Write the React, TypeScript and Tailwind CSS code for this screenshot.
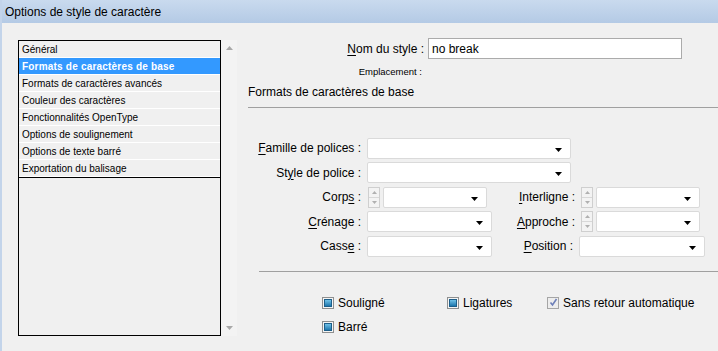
import React from 'react';

const items = [
  'Général',
  'Formats de caractères de base',
  'Formats de caractères avancés',
  'Couleur des caractères',
  'Fonctionnalités OpenType',
  'Options de soulignement',
  'Options de texte barré',
  'Exportation du balisage',
];

const Key = ({ children }: { children: React.ReactNode }) => (
  <span className="underline underline-offset-2">{children}</span>
);

const Label = ({ w, children }: { w: string; children: React.ReactNode }) => (
  <div className={`${w} shrink-0 text-right text-[12px] text-black leading-none`}>{children}</div>
);

const Caret = () => (
  <svg width="7" height="4" viewBox="0 0 7 4" className="absolute right-[8px] top-[9px]">
    <path d="M0 0h7L3.5 4z" fill="#000" />
  </svg>
);

const Select = ({ w }: { w: string }) => (
  <div className={`${w} relative h-[21px] shrink-0 rounded-[2px] border border-[#dadada] bg-white`}>
    <Caret />
  </div>
);

const Spinner = () => (
  <div className="flex h-[21px] w-[12px] shrink-0 flex-col border border-[#cfcfcf] bg-[#f3f3f3]">
    <div className="flex flex-1 items-center justify-center border-b border-[#d8d8d8]">
      <svg width="5" height="3" viewBox="0 0 5 3"><path d="M2.5 0L5 3H0z" fill="#b0b0b0" /></svg>
    </div>
    <div className="flex flex-1 items-center justify-center">
      <svg width="5" height="3" viewBox="0 0 5 3"><path d="M0 0h5L2.5 3z" fill="#b0b0b0" /></svg>
    </div>
  </div>
);

const BlueBox = () => (
  <div className="flex h-[12px] w-[12px] shrink-0 items-center justify-center border border-[#8e8f8f] bg-[#f4f4f4]">
    <div className="h-[8px] w-[8px] border border-[#1d5f8a] bg-gradient-to-b from-[#6fc2e8] to-[#1a77ad]" />
  </div>
);

const CheckedBox = () => (
  <div className="flex h-[12px] w-[12px] shrink-0 items-center justify-center border border-[#a5a5a5] bg-[#ededed]">
    <svg width="9" height="9" viewBox="0 0 9 9">
      <path d="M1.5 4.5L3.5 7L7.5 1" fill="none" stroke="#6d7fb8" strokeWidth="1.6" />
    </svg>
  </div>
);

export default function App() {
  return (
    <div
      className="flex h-[351px] w-[718px] flex-col overflow-hidden border-l-2 border-[#c3d4ea] bg-[#f0f0f0] text-black"
      style={{ fontFamily: '"Liberation Sans", Arial, sans-serif' }}
    >
      {/* Title bar */}
      <div className="flex h-[23px] shrink-0 items-center bg-gradient-to-b from-[#c9daee] to-[#b4cae5] pl-[3px] text-[12px]">
        Options de style de caractère
      </div>

      <div className="flex flex-1">
        {/* Category list */}
        <div className="ml-[16px] mt-[17px] flex">
          <div className="flex h-[296px] w-[203px] flex-col border border-black">
            {items.map((it, i) => (
              <div
                key={it}
                className={
                  i === 1
                    ? 'flex h-[17px] items-center border-b border-white bg-[#3399ff] pl-[3px] text-[10px] font-bold tracking-[0.2px] text-white'
                    : 'flex h-[17px] items-center border-b border-white pl-[3px] text-[10px] text-black'
                }
              >
                {it}
              </div>
            ))}
            <div className="border-t border-black" />
          </div>
          <div className="flex h-[296px] w-[16px] flex-col items-center justify-between bg-[#f3f3f3] py-[6px]">
            <svg width="7" height="4" viewBox="0 0 7 4"><path d="M3.5 0L7 4H0z" fill="#a8a8a8" /></svg>
            <svg width="7" height="4" viewBox="0 0 7 4"><path d="M0 0h7L3.5 4z" fill="#a8a8a8" /></svg>
          </div>
        </div>

        {/* Right panel */}
        <div className="flex flex-1 flex-col pl-[11px] pt-[15px]">
          <div className="flex items-center">
            <Label w="w-[176px]">
              <Key>N</Key>om du style :
            </Label>
            <div className="ml-[4px] flex h-[21px] w-[254px] items-center border border-[#ababab] bg-white pl-[3px] text-[12px]">
              no break
            </div>
          </div>
          <div className="mt-[8px] w-[174px] text-right text-[9.5px] leading-none">Emplacement :</div>
          <div className="mt-[9px] text-[12px] leading-none">Formats de caractères de base</div>
          <div className="mt-[9px] h-px bg-[#a0a0a0]" />

          <div className="mt-[30px] flex flex-col gap-[3.5px]">
            <div className="flex items-center">
              <Label w="w-[113px]">
                <Key>F</Key>amille de polices :
              </Label>
              <div className="ml-[6px]"><Select w="w-[204px]" /></div>
            </div>
            <div className="flex items-center">
              <Label w="w-[113px]">
                St<Key>y</Key>le de police :
              </Label>
              <div className="ml-[6px]"><Select w="w-[204px]" /></div>
            </div>
            <div className="flex items-center">
              <Label w="w-[113px]">
                Corp<Key>s</Key> :
              </Label>
              <div className="ml-[7px] flex gap-[3px]">
                <Spinner />
                <Select w="w-[104px]" />
              </div>
              <Label w="w-[88px]">
                <Key>I</Key>nterligne :
              </Label>
              <div className="ml-[6px] flex gap-[3px]">
                <Spinner />
                <Select w="w-[104px]" />
              </div>
            </div>
            <div className="flex items-center">
              <Label w="w-[113px]">
                <Key>C</Key>rénage :
              </Label>
              <div className="ml-[6px]"><Select w="w-[125px]" /></div>
              <Label w="w-[83px]">
                <Key>A</Key>pproche :
              </Label>
              <div className="ml-[6px] flex gap-[3px]">
                <Spinner />
                <Select w="w-[104px]" />
              </div>
            </div>
            <div className="flex items-center">
              <Label w="w-[113px]">
                Cass<Key>e</Key> :
              </Label>
              <div className="ml-[6px]"><Select w="w-[125px]" /></div>
              <Label w="w-[81px]">
                <Key>P</Key>osition :
              </Label>
              <div className="ml-[6px]"><Select w="w-[126px]" /></div>
            </div>
          </div>

          <div className="ml-[11px] mt-[14px] h-px bg-[#a0a0a0]" />

          <div className="ml-[74px] mt-[25px] flex flex-col gap-[12px] text-[12px] leading-none">
            <div className="flex items-center">
              <div className="flex w-[125px] items-center gap-[4px]">
                <BlueBox />
                <span>Souligné</span>
              </div>
              <div className="flex w-[100px] items-center gap-[4px]">
                <BlueBox />
                <span>Ligatures</span>
              </div>
              <div className="flex items-center gap-[4px]">
                <CheckedBox />
                <span>Sans retour automatique</span>
              </div>
            </div>
            <div className="flex items-center gap-[4px]">
              <BlueBox />
              <span>Barré</span>
            </div>
          </div>
        </div>
      </div>
    </div>
  );
}
